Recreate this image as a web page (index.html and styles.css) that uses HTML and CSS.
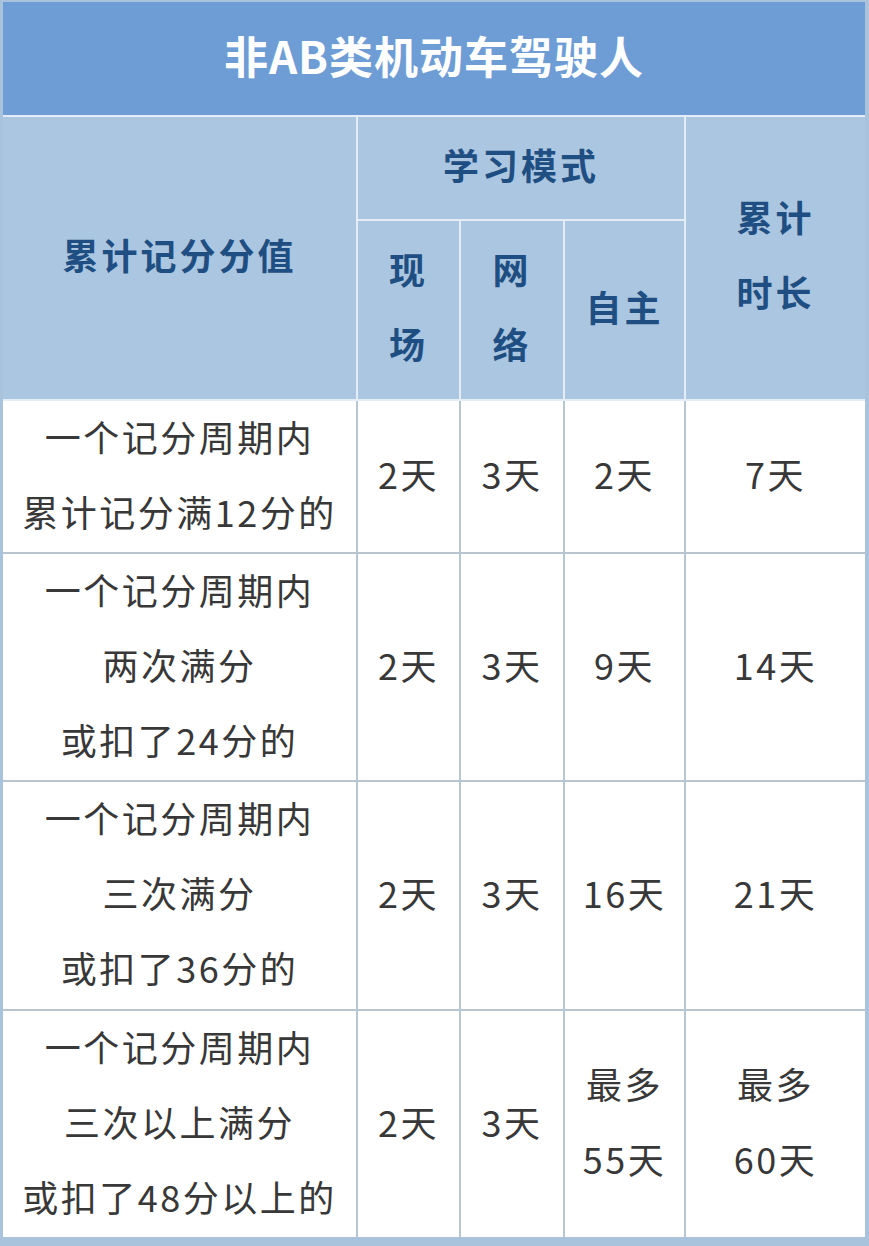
FILE: index.html
```html
<!DOCTYPE html>
<html lang="zh-CN">
<head>
<meta charset="utf-8">
<link rel="stylesheet" href="styles.css">
</head>
<body>
<div class="frame">
  <div class="title">非AB类机动车驾驶人</div>
  <div class="head">
    <div class="hcell h-score">累计记分分值</div>
    <div class="hcell h-mode">学习模式</div>
    <div class="hcell h-total">累计<br>时长</div>
    <div class="hcell">现<br>场</div>
    <div class="hcell">网<br>络</div>
    <div class="hcell">自主</div>
  </div>
  <div class="body">
    <div class="cell r1">一个记分周期内<br>累计记分满12分的</div>
    <div class="cell">2天</div>
    <div class="cell">3天</div>
    <div class="cell">2天</div>
    <div class="cell">7天</div>

    <div class="cell">一个记分周期内<br>两次满分<br>或扣了24分的</div>
    <div class="cell">2天</div>
    <div class="cell">3天</div>
    <div class="cell">9天</div>
    <div class="cell">14天</div>

    <div class="cell">一个记分周期内<br>三次满分<br>或扣了36分的</div>
    <div class="cell">2天</div>
    <div class="cell">3天</div>
    <div class="cell">16天</div>
    <div class="cell">21天</div>

    <div class="cell">一个记分周期内<br>三次以上满分<br>或扣了48分以上的</div>
    <div class="cell">2天</div>
    <div class="cell">3天</div>
    <div class="cell">最多<br>55天</div>
    <div class="cell">最多<br>60天</div>
  </div>
</div>
</body>
</html>
```
FILE: styles.css
```css
html, body {
  margin: 0;
  padding: 0;
}
body {
  width: 869px;
  height: 1246px;
  background: #aac3dd;
  overflow: hidden;
  font-family: "Noto Sans CJK SC", "Noto Sans", sans-serif;
}
.frame {
  padding: 2px 4px 0 3px;
}
.title {
  height: 113px;
  box-sizing: border-box;
  padding-bottom: 8px;
  background: #6e9dd6;
  color: #ffffff;
  font-weight: 700;
  font-size: 44px;
  letter-spacing: 1px;
  display: flex;
  align-items: center;
  justify-content: center;
}
.head {
  display: grid;
  grid-template-columns: 353px 101px 102px 119px 179px;
  grid-template-rows: 102px 178px;
  gap: 2px;
  padding: 2px 0;
  background: #e4ecf5;
}
.hcell {
  box-sizing: border-box;
  padding-bottom: 8px;
  background: #abc6e0;
  color: #1f4f82;
  font-weight: 700;
  font-size: 36px;
  letter-spacing: 3px;
  line-height: 75px;
  display: flex;
  align-items: center;
  justify-content: center;
  text-align: center;
}
.h-score {
  grid-row: 1 / 3;
  grid-column: 1;
}
.h-mode {
  grid-row: 1;
  grid-column: 2 / 5;
}
.h-total {
  grid-row: 1 / 3;
  grid-column: 5;
}
.body {
  display: grid;
  grid-template-columns: 353px 101px 102px 119px 179px;
  grid-template-rows: 151px 226px 227px 226px;
  gap: 2px;
  background: #b8c6d1;
}
.cell {
  box-sizing: border-box;
  padding-bottom: 6px;
  background: #ffffff;
  color: #383838;
  font-size: 36px;
  letter-spacing: 2.5px;
  line-height: 75px;
  display: flex;
  align-items: center;
  justify-content: center;
  text-align: center;
}
```
